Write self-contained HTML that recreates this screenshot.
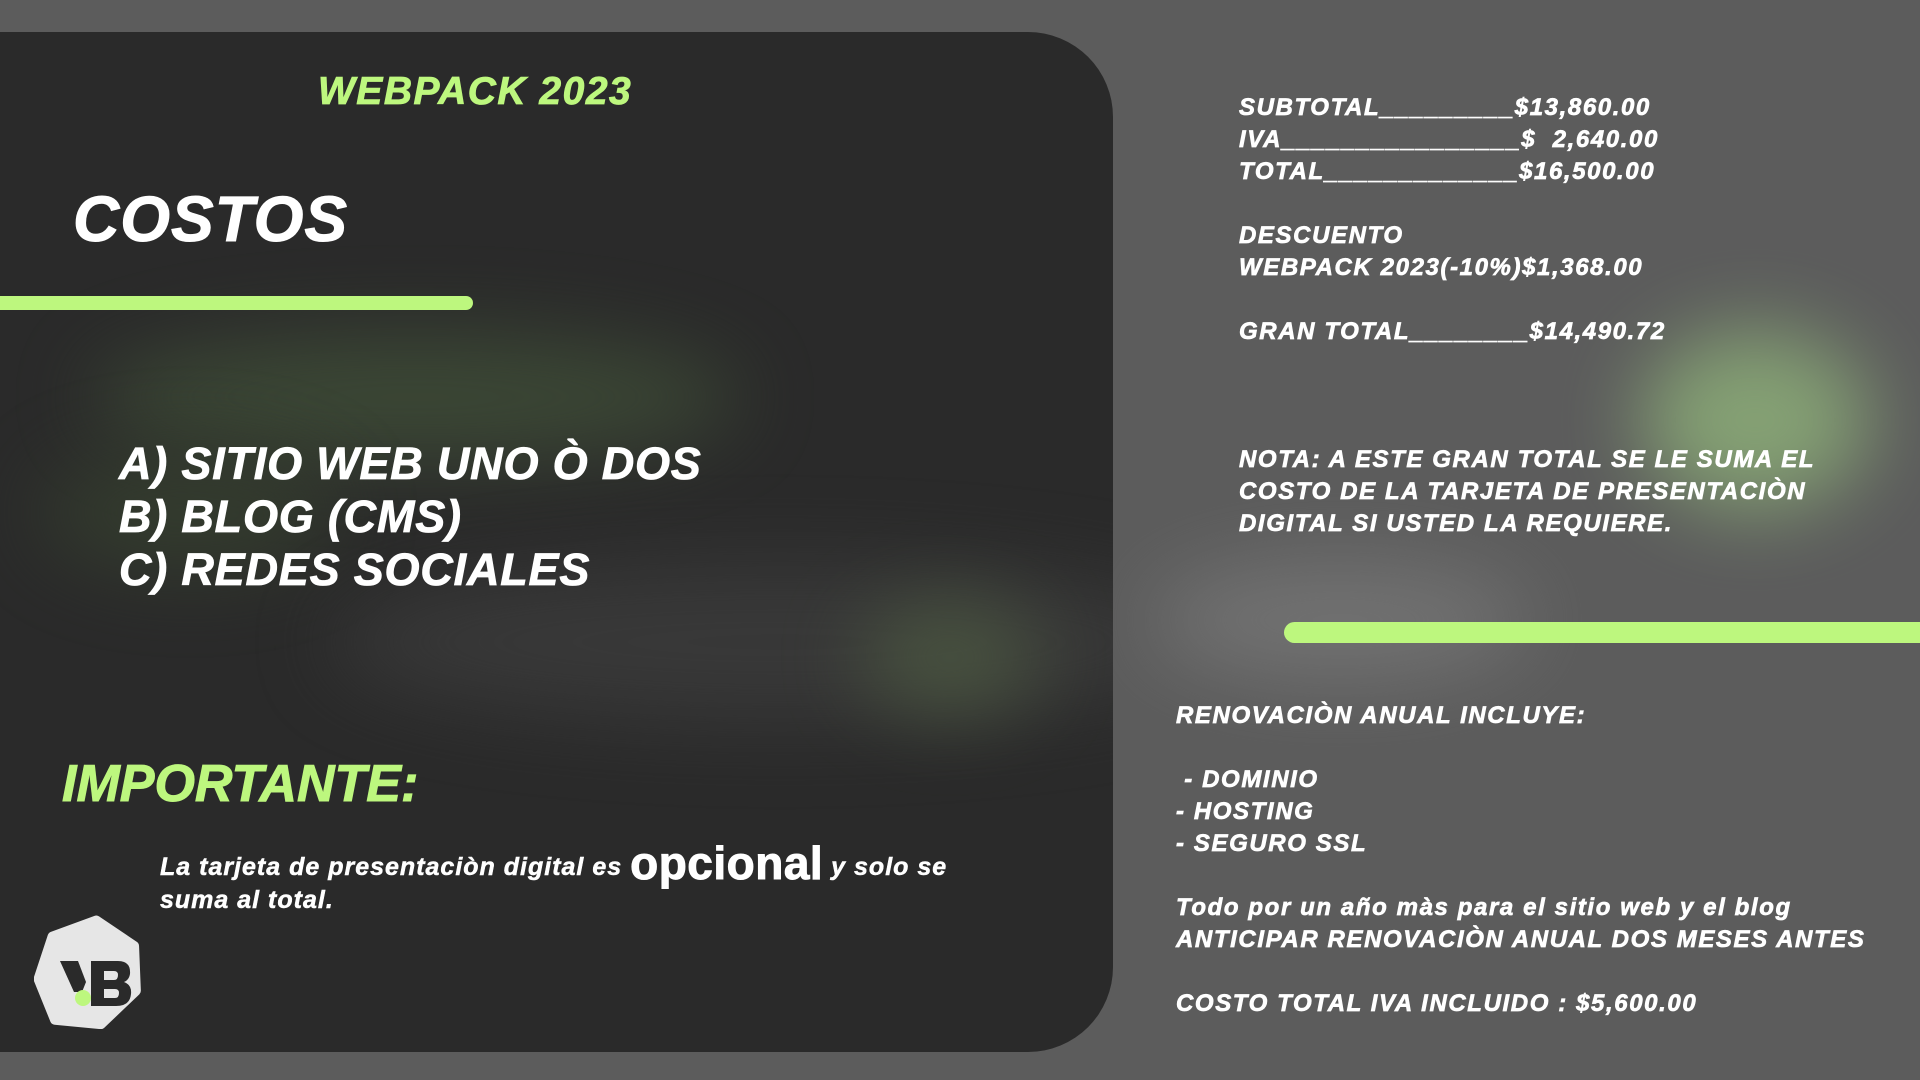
<!DOCTYPE html>
<html><head><meta charset="utf-8"><style>
html,body{margin:0;padding:0}
body{width:1920px;height:1080px;background:#5c5c5c;position:relative;overflow:hidden;font-family:"Liberation Sans",sans-serif;font-weight:bold;font-style:italic;color:#fff}
.abs{position:absolute;white-space:pre}
.blur{position:absolute;border-radius:50%;filter:blur(40px)}
.panel{position:absolute;left:0;top:32px;width:1113px;height:1020px;background:#2a2a2a;border-radius:0 85px 85px 0;overflow:hidden}
.g{color:#bdf77e}
.r{font-size:24px;line-height:32px;letter-spacing:1.6px;-webkit-text-stroke:0.7px #fff}
</style></head><body>
<div class="blur" style="left:1640px;top:330px;width:230px;height:180px;background:#8fb27a;opacity:.8"></div>
<div class="blur" style="left:1150px;top:560px;width:380px;height:120px;background:#808080;opacity:.6"></div>
<div class="panel">
  <div class="blur" style="left:90px;top:300px;width:650px;height:130px;background:#3d4a36;opacity:.9"></div>
  <div class="blur" style="left:40px;top:420px;width:300px;height:120px;background:#36402f;opacity:.8"></div>
  <div class="blur" style="left:330px;top:530px;width:900px;height:160px;background:#3a3a3a;opacity:.9"></div>
  <div class="blur" style="left:860px;top:570px;width:180px;height:110px;background:#4d5a42;opacity:.8"></div>
</div>
<div class="abs g" style="left:318px;top:70px;font-size:39px;letter-spacing:1.5px;-webkit-text-stroke:0.8px #bdf77e">WEBPACK 2023</div>
<div class="abs" style="left:73px;top:182px;font-size:64px;letter-spacing:1px;-webkit-text-stroke:1px #fff">COSTOS</div>
<div class="abs" style="left:-10px;top:296px;width:483px;height:14px;background:#bdf77e;border-radius:7px"></div>
<div class="abs" style="left:119px;top:437px;font-size:45px;line-height:53px;letter-spacing:0.8px;-webkit-text-stroke:0.8px #fff">A) SITIO WEB UNO Ò DOS
B) BLOG (CMS)
C) REDES SOCIALES</div>
<div class="abs g" style="left:62px;top:754px;font-size:52px;-webkit-text-stroke:1px #bdf77e">IMPORTANTE:</div>
<div class="abs" style="left:160px;top:836px;font-size:25px;letter-spacing:1px;-webkit-text-stroke:0.5px #fff">La tarjeta de presentaciòn digital es <span style="font-size:46px;font-style:normal;vertical-align:-4px;letter-spacing:0.5px;-webkit-text-stroke:1px #fff">opcional</span> y solo se</div>
<div class="abs" style="left:160px;top:886px;font-size:25px;letter-spacing:1px;-webkit-text-stroke:0.5px #fff">suma al total.</div>
<svg class="abs" style="left:34px;top:914px" width="110" height="115" viewBox="0 0 110 115">
  <polygon points="55,6 96,26 104,70 74,108 28,110 6,72 14,28" fill="#e6e6e6" stroke="#e6e6e6" stroke-width="10" stroke-linejoin="round" transform="rotate(8 55 58)"/>
  <polygon points="26,47 44,47 52,68 48,78 40,78" fill="#2a2a2a"/>
  <path d="M57,47 H84 Q97,47 96,60 Q95,66 90,68 Q98,71 97,80 Q96,92 82,92 H57 Z M70,57 V66 H80 Q84,66 84,61 Q84,57 80,57 Z M70,75 V84 H81 Q85,84 85,79 Q85,75 81,75 Z" fill="#2a2a2a"/>
  <circle cx="49" cy="84" r="8" fill="#bdf77e"/>
</svg>
<div class="abs r" style="left:1239px;top:92px">SUBTOTAL_________$13,860.00
IVA________________$  2,640.00
TOTAL_____________$16,500.00

DESCUENTO
WEBPACK 2023(-10%)$1,368.00

GRAN TOTAL________$14,490.72



NOTA: A ESTE GRAN TOTAL SE LE SUMA EL
COSTO DE LA TARJETA DE PRESENTACIÒN
DIGITAL SI USTED LA REQUIERE.</div>
<div class="abs" style="left:1284px;top:622px;width:660px;height:21px;background:#bdf77e;border-radius:11px"></div>
<div class="abs r" style="left:1176px;top:700px">RENOVACIÒN ANUAL INCLUYE:

 - DOMINIO
- HOSTING
- SEGURO SSL

Todo por un año màs para el sitio web y el blog
ANTICIPAR RENOVACIÒN ANUAL DOS MESES ANTES

COSTO TOTAL IVA INCLUIDO : $5,600.00</div>
</body></html>
